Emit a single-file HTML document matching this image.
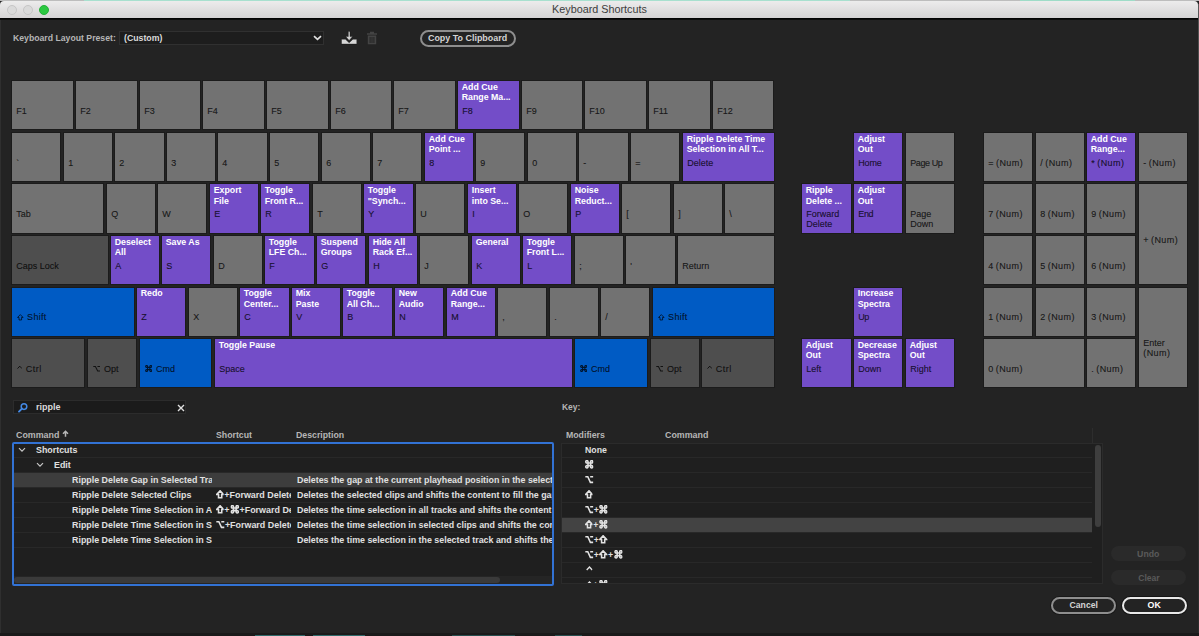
<!DOCTYPE html>
<html>
<head>
<meta charset="utf-8">
<title>Keyboard Shortcuts</title>
<style>
html,body{margin:0;padding:0;}
body{width:1199px;height:636px;overflow:hidden;background:#232323;position:relative;font-family:"Liberation Sans",sans-serif;font-size:10px;color:#c8c8c8;}
.abs{position:absolute;}
#topline{position:absolute;left:0;top:0;width:1199px;height:1px;background:#bdbdbd;}
#titlebar{position:absolute;left:0;top:1px;width:1198px;height:17px;background:linear-gradient(#ececec,#d5d3d4);border-radius:4px 4px 0 0;}
#tbline{position:absolute;left:0;top:18px;width:1198px;height:2px;background:linear-gradient(#000,#101010);}
#title{position:absolute;left:0;width:1199px;top:2px;text-align:center;font-size:10.800px;line-height:13px;color:#3c3c3c;}
.tl{position:absolute;top:3.500px;width:10px;height:10px;border-radius:50%;box-sizing:border-box;}
#redge{position:absolute;left:1198px;top:4px;width:1px;height:632px;background:linear-gradient(#5a5a5a,#3a3a3a 20%,#2c2c2c);}
#bedge{position:absolute;left:0;top:633px;width:1199px;height:3px;background:#1a1a1a;}
.k{position:absolute;box-sizing:border-box;overflow:hidden;box-shadow:0 0 0 1px #1b1b1b;}
.k u{text-decoration:none;}
.gl{display:inline-block;vertical-align:-0.500px;margin-right:3.500px;margin-left:0.800px;}
.gw{display:inline-block;vertical-align:-0.900px;margin:0 0.600px;}
.gw:first-child{margin-left:-0.500px;}
.k.g{background:#727272;}
.k.d{background:#4e4e4e;}
.k.p{background:#734dc8;}
.k.b{background:#005bc4;}
.k b{position:absolute;left:3.700px;font-size:8.800px;line-height:10.500px;color:#fff;font-weight:bold;white-space:nowrap;}
.k i{position:absolute;left:4.200px;-webkit-text-stroke:0.200px rgba(0,0,0,0.5);font-style:normal;font-size:9px;line-height:10.500px;color:rgba(0,0,0,0.78);white-space:nowrap;}
.lbl{position:absolute;white-space:nowrap;font-weight:bold;color:#b6b6b6;font-size:9.300px;line-height:12px;transform-origin:0 50%;}
.sc{display:inline-block;white-space:nowrap;transform-origin:0 50%;}
#dd{position:absolute;left:119px;top:31px;width:205px;height:14px;background:#1d1d1d;border:1px solid #303030;box-sizing:border-box;}
.pill{position:absolute;box-sizing:border-box;border-radius:9px;text-align:center;font-weight:bold;white-space:nowrap;font-size:9.600px;}
.pill .sc{transform-origin:50% 50%;}
#search{position:absolute;left:13px;top:400px;width:173px;height:14px;background:#1b1b1b;border:1px solid #2c2c2c;box-sizing:border-box;}
#tbl{position:absolute;left:12px;top:442px;width:542px;height:144px;box-sizing:border-box;border:2px solid #3272d4;border-radius:2px;background:#1f1f1f;overflow:hidden;}
.row{position:absolute;left:0;width:100%;height:15px;box-sizing:border-box;border-bottom:1px solid #282828;}
.cell{position:absolute;top:1px;height:13px;overflow:hidden;white-space:nowrap;font-weight:bold;color:#e0e0e0;font-size:9.300px;line-height:12px;}
#tbl2{position:absolute;left:561px;top:443px;width:542px;height:141px;box-sizing:border-box;border:1px solid #2b2b2b;background:#1f1f1f;overflow:hidden;}
</style>
</head>
<body>
<div id="topline"><div class="abs" style="left:84px;top:0;width:766px;height:1px;background:#a8e0cf"></div><div class="abs" style="left:1020px;top:0;width:115px;height:1px;background:#9fdcc8"></div></div>
<div id="titlebar">
  <div class="tl" style="left:7px;background:#dadada;border:1px solid #c6c6c6"></div>
  <div class="tl" style="left:23px;background:#dadada;border:1px solid #c6c6c6"></div>
  <div class="tl" style="left:38.700px;background:#2bc840;border:1px solid #24b038"></div>
  <div id="title">Keyboard Shortcuts</div>
</div>
<div id="tbline"></div>
<div id="redge"></div><div class="abs" style="left:0;top:20px;width:1px;height:613px;background:#2f2f2f"></div>
<div class="lbl" style="left:13px;top:32.3px;transform:scaleX(0.934);">Keyboard Layout Preset:</div><div id="dd"><div class="lbl" style="left:4.2px;top:0.3px;transform:scaleX(0.94);color:#dadada">(Custom)</div><svg class="abs" style="left:193px;top:3px" width="9" height="6" viewBox="0 0 9 6"><path d="M1 1.200 L4.500 4.300 L8 1.200" fill="none" stroke="#e0e0e0" stroke-width="1.700"/></svg></div><svg class="abs" style="left:341px;top:31px" width="16" height="14" viewBox="0 0 16 14"><path d="M7.300 0.600h1.700v5h2.600L8.150 9.500 4.700 5.600h2.600z M0.500 8.200h3.900l3.750 3.600 3.750-3.600h3.900v4.900h-15.300z" fill="#d6d6d6" stroke="#111" stroke-width="0.400"/></svg><svg class="abs" style="left:366px;top:31px" width="12" height="14" viewBox="0 0 12 14"><path d="M4 0.800h4v1.400h3V3.800H1V2.200h3z M1.800 4.600h8.400v8.600H1.800z M3.600 6v6h1V6z M5.500 6v6h1V6z M7.400 6v6h1V6z" fill="#444" fill-rule="evenodd"/></svg><div class="pill" style="left:420px;top:30px;width:96px;height:17px;border:2px solid #8e8e8e;color:#d4d4d4;line-height:12.500px"><span class="sc" style="transform:scaleX(0.93)">Copy To Clipboard</span></div>
<div class="k g" style="left:12px;top:81px;width:61px;height:48px"><i style="top:24.55px">F1</i></div>
<div class="k g" style="left:76px;top:81px;width:61px;height:48px"><i style="top:24.55px">F2</i></div>
<div class="k g" style="left:140px;top:81px;width:60px;height:48px"><i style="top:24.55px">F3</i></div>
<div class="k g" style="left:203px;top:81px;width:61px;height:48px"><i style="top:24.55px">F4</i></div>
<div class="k g" style="left:267px;top:81px;width:61px;height:48px"><i style="top:24.55px">F5</i></div>
<div class="k g" style="left:331px;top:81px;width:60px;height:48px"><i style="top:24.55px">F6</i></div>
<div class="k g" style="left:394px;top:81px;width:61px;height:48px"><i style="top:24.55px">F7</i></div>
<div class="k p" style="left:458px;top:81px;width:61px;height:48px"><b style="top:0.8px">Add Cue<br>Range Ma...</b><i style="top:24.55px">F8</i></div>
<div class="k g" style="left:522px;top:81px;width:60px;height:48px"><i style="top:24.55px">F9</i></div>
<div class="k g" style="left:585px;top:81px;width:61px;height:48px"><i style="top:24.55px">F10</i></div>
<div class="k g" style="left:649px;top:81px;width:61px;height:48px"><i style="top:24.55px">F11</i></div>
<div class="k g" style="left:713px;top:81px;width:60px;height:48px"><i style="top:24.55px">F12</i></div>
<div class="k g" style="left:12px;top:133px;width:48px;height:48px"><i style="top:24.55px">`</i></div>
<div class="k g" style="left:64px;top:133px;width:48px;height:48px"><i style="top:24.55px">1</i></div>
<div class="k g" style="left:115px;top:133px;width:49px;height:48px"><i style="top:24.55px">2</i></div>
<div class="k g" style="left:167px;top:133px;width:48px;height:48px"><i style="top:24.55px">3</i></div>
<div class="k g" style="left:218px;top:133px;width:49px;height:48px"><i style="top:24.55px">4</i></div>
<div class="k g" style="left:270px;top:133px;width:48px;height:48px"><i style="top:24.55px">5</i></div>
<div class="k g" style="left:322px;top:133px;width:48px;height:48px"><i style="top:24.55px">6</i></div>
<div class="k g" style="left:373px;top:133px;width:48px;height:48px"><i style="top:24.55px">7</i></div>
<div class="k p" style="left:425px;top:133px;width:48px;height:48px"><b style="top:0.8px">Add Cue<br>Point ...</b><i style="top:24.55px">8</i></div>
<div class="k g" style="left:476px;top:133px;width:48px;height:48px"><i style="top:24.55px">9</i></div>
<div class="k g" style="left:528px;top:133px;width:48px;height:48px"><i style="top:24.55px">0</i></div>
<div class="k g" style="left:579px;top:133px;width:49px;height:48px"><i style="top:24.55px">-</i></div>
<div class="k g" style="left:631px;top:133px;width:48px;height:48px"><i style="top:24.55px">=</i></div>
<div class="k p" style="left:683px;top:133px;width:91px;height:48px"><b style="top:0.8px">Ripple Delete Time<br>Selection in All T...</b><i style="top:24.55px">Delete</i></div>
<div class="k g" style="left:12px;top:184px;width:91px;height:49px"><i style="top:24.95px">Tab</i></div>
<div class="k g" style="left:107px;top:184px;width:48px;height:49px"><i style="top:24.95px">Q</i></div>
<div class="k g" style="left:158px;top:184px;width:48px;height:49px"><i style="top:24.95px">W</i></div>
<div class="k p" style="left:210px;top:184px;width:48px;height:49px"><b style="top:1.2px">Export<br>File</b><i style="top:24.95px">E</i></div>
<div class="k p" style="left:261px;top:184px;width:48px;height:49px"><b style="top:1.2px">Toggle<br>Front R...</b><i style="top:24.95px">R</i></div>
<div class="k g" style="left:313px;top:184px;width:48px;height:49px"><i style="top:24.95px">T</i></div>
<div class="k p" style="left:364px;top:184px;width:49px;height:49px"><b style="top:1.2px">Toggle<br>"Synch...</b><i style="top:24.95px">Y</i></div>
<div class="k g" style="left:416px;top:184px;width:48px;height:49px"><i style="top:24.95px">U</i></div>
<div class="k p" style="left:468px;top:184px;width:48px;height:49px"><b style="top:1.2px">Insert<br>into Se...</b><i style="top:24.95px">I</i></div>
<div class="k g" style="left:519px;top:184px;width:48px;height:49px"><i style="top:24.95px">O</i></div>
<div class="k p" style="left:571px;top:184px;width:48px;height:49px"><b style="top:1.2px">Noise<br>Reduct...</b><i style="top:24.95px">P</i></div>
<div class="k g" style="left:622px;top:184px;width:48px;height:49px"><i style="top:24.95px">[</i></div>
<div class="k g" style="left:674px;top:184px;width:48px;height:49px"><i style="top:24.95px">]</i></div>
<div class="k g" style="left:725px;top:184px;width:49px;height:49px"><i style="top:24.95px">\</i></div>
<div class="k d" style="left:12px;top:236px;width:96px;height:48px"><i style="top:24.55px">Caps Lock</i></div>
<div class="k p" style="left:111px;top:236px;width:48px;height:48px"><b style="top:0.8px">Deselect<br>All</b><i style="top:24.55px">A</i></div>
<div class="k p" style="left:162px;top:236px;width:48px;height:48px"><b style="top:0.8px">Save As</b><i style="top:24.55px">S</i></div>
<div class="k g" style="left:214px;top:236px;width:48px;height:48px"><i style="top:24.55px">D</i></div>
<div class="k p" style="left:265px;top:236px;width:49px;height:48px"><b style="top:0.8px">Toggle<br>LFE Ch...</b><i style="top:24.55px">F</i></div>
<div class="k p" style="left:317px;top:236px;width:48px;height:48px"><b style="top:0.8px">Suspend<br>Groups</b><i style="top:24.55px">G</i></div>
<div class="k p" style="left:369px;top:236px;width:48px;height:48px"><b style="top:0.8px">Hide All<br>Rack Ef...</b><i style="top:24.55px">H</i></div>
<div class="k g" style="left:420px;top:236px;width:48px;height:48px"><i style="top:24.55px">J</i></div>
<div class="k p" style="left:472px;top:236px;width:48px;height:48px"><b style="top:0.8px">General</b><i style="top:24.55px">K</i></div>
<div class="k p" style="left:523px;top:236px;width:48px;height:48px"><b style="top:0.8px">Toggle<br>Front L...</b><i style="top:24.55px">L</i></div>
<div class="k g" style="left:575px;top:236px;width:48px;height:48px"><i style="top:24.55px">;</i></div>
<div class="k g" style="left:626px;top:236px;width:49px;height:48px"><i style="top:24.55px">'</i></div>
<div class="k g" style="left:678px;top:236px;width:96px;height:48px"><i style="top:24.55px">Return</i></div>
<div class="k b" style="left:12px;top:288px;width:122px;height:48px"><i style="top:24.15px"><svg class="gl" height="6.6" viewBox="0 0 7.500 7.500"><path d="M3.750 0.700 L6.900 3.900 H5.200 V6.800 H2.300 V3.900 H0.600 Z" fill="none" stroke="rgba(0,0,0,0.78)" stroke-width="1.0" stroke-linejoin="miter"/></svg><u style="letter-spacing:0.3px">Shift</u></i></div>
<div class="k p" style="left:137px;top:288px;width:48px;height:48px"><b style="top:0.4px">Redo</b><i style="top:24.15px">Z</i></div>
<div class="k g" style="left:189px;top:288px;width:48px;height:48px"><i style="top:24.15px">X</i></div>
<div class="k p" style="left:240px;top:288px;width:49px;height:48px"><b style="top:0.4px">Toggle<br>Center...</b><i style="top:24.15px">C</i></div>
<div class="k p" style="left:292px;top:288px;width:48px;height:48px"><b style="top:0.4px">Mix<br>Paste</b><i style="top:24.15px">V</i></div>
<div class="k p" style="left:343px;top:288px;width:49px;height:48px"><b style="top:0.4px">Toggle<br>All Ch...</b><i style="top:24.15px">B</i></div>
<div class="k p" style="left:395px;top:288px;width:48px;height:48px"><b style="top:0.4px">New<br>Audio</b><i style="top:24.15px">N</i></div>
<div class="k p" style="left:447px;top:288px;width:48px;height:48px"><b style="top:0.4px">Add Cue<br>Range...</b><i style="top:24.15px">M</i></div>
<div class="k g" style="left:498px;top:288px;width:48px;height:48px"><i style="top:24.15px">,</i></div>
<div class="k g" style="left:550px;top:288px;width:48px;height:48px"><i style="top:24.15px">.</i></div>
<div class="k g" style="left:601px;top:288px;width:48px;height:48px"><i style="top:24.15px">/</i></div>
<div class="k b" style="left:653px;top:288px;width:121px;height:48px"><i style="top:24.15px"><svg class="gl" height="6.6" viewBox="0 0 7.500 7.500"><path d="M3.750 0.700 L6.900 3.900 H5.200 V6.800 H2.300 V3.900 H0.600 Z" fill="none" stroke="rgba(0,0,0,0.78)" stroke-width="1.0" stroke-linejoin="miter"/></svg><u style="letter-spacing:0.3px">Shift</u></i></div>
<div class="k d" style="left:12px;top:339px;width:72px;height:48px"><i style="top:24.55px"><svg class="gl" width="5.500" height="7" viewBox="0 0 5.500 7" style="margin-right:3.300px"><path d="M0.500 3.600 L2.750 1.200 L5 3.600" fill="none" stroke="rgba(0,0,0,0.78)" stroke-width="1"/></svg><u style="letter-spacing:0.45px">Ctrl</u></i></div>
<div class="k d" style="left:88px;top:339px;width:48px;height:48px"><i style="top:24.55px"><svg class="gl" height="7" viewBox="0 0 8 7.500"><path d="M0.300 1.500 H2.600 L5 6.500 H7.700 M4.800 1.500 H7.700" fill="none" stroke="rgba(0,0,0,0.78)" stroke-width="1.1"/></svg>Opt</i></div>
<div class="k b" style="left:140px;top:339px;width:71px;height:48px"><i style="top:24.55px"><svg class="gl" height="7" viewBox="0 0 8 7.500"><path d="M2.800 2.600 H5.200 V4.900 H2.800 Z M2.800 2.600 V1.700 A1.050 1.050 0 1 0 1.750 2.600 Z M5.200 2.600 H6.250 A1.050 1.050 0 1 0 5.200 1.700 Z M5.200 4.900 V5.800 A1.050 1.050 0 1 0 6.250 4.900 Z M2.800 4.900 H1.750 A1.050 1.050 0 1 0 2.800 5.800 Z" fill="none" stroke="rgba(0,0,0,0.78)" stroke-width="1.2"/></svg>Cmd</i></div>
<div class="k p" style="left:215px;top:339px;width:357px;height:48px"><b style="top:0.8px">Toggle Pause</b><i style="top:24.55px">Space</i></div>
<div class="k b" style="left:575px;top:339px;width:72px;height:48px"><i style="top:24.55px"><svg class="gl" height="7" viewBox="0 0 8 7.500"><path d="M2.800 2.600 H5.200 V4.900 H2.800 Z M2.800 2.600 V1.700 A1.050 1.050 0 1 0 1.750 2.600 Z M5.200 2.600 H6.250 A1.050 1.050 0 1 0 5.200 1.700 Z M5.200 4.900 V5.800 A1.050 1.050 0 1 0 6.250 4.900 Z M2.800 4.900 H1.750 A1.050 1.050 0 1 0 2.800 5.800 Z" fill="none" stroke="rgba(0,0,0,0.78)" stroke-width="1.2"/></svg>Cmd</i></div>
<div class="k d" style="left:651px;top:339px;width:48px;height:48px"><i style="top:24.55px"><svg class="gl" height="7" viewBox="0 0 8 7.500"><path d="M0.300 1.500 H2.600 L5 6.500 H7.700 M4.800 1.500 H7.700" fill="none" stroke="rgba(0,0,0,0.78)" stroke-width="1.1"/></svg>Opt</i></div>
<div class="k d" style="left:702px;top:339px;width:72px;height:48px"><i style="top:24.55px"><svg class="gl" width="5.500" height="7" viewBox="0 0 5.500 7" style="margin-right:3.300px"><path d="M0.500 3.600 L2.750 1.200 L5 3.600" fill="none" stroke="rgba(0,0,0,0.78)" stroke-width="1"/></svg><u style="letter-spacing:0.45px">Ctrl</u></i></div>
<div class="k p" style="left:854px;top:133px;width:48px;height:48px"><b style="top:0.8px">Adjust<br>Out</b><i style="top:24.55px"><u style="letter-spacing:-0.15px">Home</u></i></div>
<div class="k g" style="left:906px;top:133px;width:48px;height:48px"><i style="top:24.55px"><u style="letter-spacing:-0.4px">Page Up</u></i></div>
<div class="k p" style="left:802px;top:184px;width:49px;height:49px"><b style="top:1.2px">Ripple<br>Delete ...</b><i style="top:24.95px">Forward<br>Delete</i></div>
<div class="k p" style="left:854px;top:184px;width:48px;height:49px"><b style="top:1.2px">Adjust<br>Out</b><i style="top:24.95px"><u style="letter-spacing:-0.3px">End</u></i></div>
<div class="k g" style="left:906px;top:184px;width:48px;height:49px"><i style="top:24.95px">Page<br>Down</i></div>
<div class="k p" style="left:854px;top:288px;width:48px;height:48px"><b style="top:0.4px">Increase<br>Spectra</b><i style="top:24.15px"><u style="letter-spacing:-0.4px">Up</u></i></div>
<div class="k p" style="left:802px;top:339px;width:49px;height:48px"><b style="top:0.8px">Adjust<br>Out</b><i style="top:24.55px">Left</i></div>
<div class="k p" style="left:854px;top:339px;width:48px;height:48px"><b style="top:0.8px">Decrease<br>Spectra</b><i style="top:24.55px">Down</i></div>
<div class="k p" style="left:906px;top:339px;width:48px;height:48px"><b style="top:0.8px">Adjust<br>Out</b><i style="top:24.55px">Right</i></div>
<div class="k g" style="left:984px;top:133px;width:48px;height:48px"><i style="top:24.55px">= <u style="letter-spacing:0.45px">(Num)</u></i></div>
<div class="k g" style="left:1036px;top:133px;width:48px;height:48px"><i style="top:24.55px">/ <u style="letter-spacing:0.45px">(Num)</u></i></div>
<div class="k p" style="left:1087px;top:133px;width:48px;height:48px"><b style="top:0.8px">Add Cue<br>Range...</b><i style="top:24.55px">* <u style="letter-spacing:0.45px">(Num)</u></i></div>
<div class="k g" style="left:1139px;top:133px;width:48px;height:48px"><i style="top:24.55px">- <u style="letter-spacing:0.45px">(Num)</u></i></div>
<div class="k g" style="left:984px;top:184px;width:48px;height:49px"><i style="top:24.95px">7 <u style="letter-spacing:0.45px">(Num)</u></i></div>
<div class="k g" style="left:1036px;top:184px;width:48px;height:49px"><i style="top:24.95px">8 <u style="letter-spacing:0.45px">(Num)</u></i></div>
<div class="k g" style="left:1087px;top:184px;width:48px;height:49px"><i style="top:24.95px">9 <u style="letter-spacing:0.45px">(Num)</u></i></div>
<div class="k g" style="left:984px;top:236px;width:48px;height:48px"><i style="top:24.55px">4 <u style="letter-spacing:0.45px">(Num)</u></i></div>
<div class="k g" style="left:1036px;top:236px;width:48px;height:48px"><i style="top:24.55px">5 <u style="letter-spacing:0.45px">(Num)</u></i></div>
<div class="k g" style="left:1087px;top:236px;width:48px;height:48px"><i style="top:24.55px">6 <u style="letter-spacing:0.45px">(Num)</u></i></div>
<div class="k g" style="left:984px;top:288px;width:48px;height:48px"><i style="top:24.15px">1 <u style="letter-spacing:0.45px">(Num)</u></i></div>
<div class="k g" style="left:1036px;top:288px;width:48px;height:48px"><i style="top:24.15px">2 <u style="letter-spacing:0.45px">(Num)</u></i></div>
<div class="k g" style="left:1087px;top:288px;width:48px;height:48px"><i style="top:24.15px">3 <u style="letter-spacing:0.45px">(Num)</u></i></div>
<div class="k g" style="left:1139px;top:184px;width:48px;height:100px"><i style="top:50.75px">+ <u style="letter-spacing:0.45px">(Num)</u></i></div>
<div class="k g" style="left:1139px;top:288px;width:48px;height:99px"><i style="top:49.85px">Enter<br><u style="letter-spacing:0.45px">(Num)</u></i></div>
<div class="k g" style="left:984px;top:339px;width:100px;height:48px"><i style="top:24.55px">0 <u style="letter-spacing:0.45px">(Num)</u></i></div>
<div class="k g" style="left:1087px;top:339px;width:48px;height:48px"><i style="top:24.55px">. <u style="letter-spacing:0.45px">(Num)</u></i></div>
<div id="search"><svg class="abs" style="left:2.500px;top:0.500px" width="12" height="12" viewBox="0 0 12 12"><circle cx="7" cy="4.600" r="2.800" fill="none" stroke="#4489e4" stroke-width="1.500"/><path d="M4.900 6.700 L2 9.600" stroke="#4489e4" stroke-width="1.900" stroke-linecap="round"/></svg><div class="lbl" style="left:21.5px;top:0px;transform:scaleX(0.97);color:#dadada">ripple</div><svg class="abs" style="left:163px;top:3px" width="8" height="8" viewBox="0 0 8 8"><path d="M1 1 L7 7 M7 1 L1 7" stroke="#e0e0e0" stroke-width="1.400"/></svg></div><div class="lbl" style="left:15.9px;top:428.5px;transform:scaleX(0.955);">Command</div><svg class="abs" style="left:61.500px;top:430px" width="7" height="8" viewBox="0 0 7 8"><path d="M3.500 6.800 V1.600 M1 3.700 L3.500 1.300 L6 3.700" fill="none" stroke="#b8b8b8" stroke-width="1.500"/></svg><div class="lbl" style="left:215.5px;top:428.5px;transform:scaleX(0.94);">Shortcut</div><div class="lbl" style="left:295.5px;top:428.5px;transform:scaleX(0.94);">Description</div><div id="tbl"><div class="row" style="top:-1px"><div class="cell" style="left:21.5px;width:176.5px"><span class="sc" style="transform:scaleX(0.955)">Shortcuts</span></div></div><div class="row" style="top:14px"><div class="cell" style="left:40px;width:158px"><span class="sc" style="transform:scaleX(0.955)">Edit</span></div></div><div class="row" style="top:29px;background:#3d3d3d"><div class="cell" style="left:58px;width:140px"><span class="sc" style="transform:scaleX(0.955)">Ripple Delete Gap in Selected Tracks</span></div><div class="cell" style="left:282.9px;width:256.1px"><span class="sc" style="transform:scaleX(0.953)">Deletes the gap at the current playhead position in the selected tracks</span></div></div><div class="row" style="top:44px"><div class="cell" style="left:58px;width:140px"><span class="sc" style="transform:scaleX(0.955)">Ripple Delete Selected Clips</span></div><div class="cell" style="left:202.3px;width:75.19999999999999px"><span class="sc" style="transform:scaleX(0.96)"><svg class="gw" height="8.6" viewBox="0 0 7.500 7.500"><path d="M3.750 0.700 L6.900 3.900 H5.200 V6.800 H2.300 V3.900 H0.600 Z" fill="none" stroke="#e2e2e2" stroke-width="1.45" stroke-linejoin="miter"/></svg>+Forward Delete</span></div><div class="cell" style="left:282.9px;width:256.1px"><span class="sc" style="transform:scaleX(0.953)">Deletes the selected clips and shifts the content to fill the gap</span></div></div><div class="row" style="top:59px"><div class="cell" style="left:58px;width:140px"><span class="sc" style="transform:scaleX(0.955)">Ripple Delete Time Selection in All Tracks</span></div><div class="cell" style="left:202.3px;width:75.19999999999999px"><span class="sc" style="transform:scaleX(0.96)"><svg class="gw" height="8.6" viewBox="0 0 7.500 7.500"><path d="M3.750 0.700 L6.900 3.900 H5.200 V6.800 H2.300 V3.900 H0.600 Z" fill="none" stroke="#e2e2e2" stroke-width="1.45" stroke-linejoin="miter"/></svg>+<svg class="gw" height="8.6" viewBox="0 0 8 7.500"><path d="M2.800 2.600 H5.200 V4.900 H2.800 Z M2.800 2.600 V1.700 A1.050 1.050 0 1 0 1.750 2.600 Z M5.200 2.600 H6.250 A1.050 1.050 0 1 0 5.200 1.700 Z M5.200 4.900 V5.800 A1.050 1.050 0 1 0 6.250 4.900 Z M2.800 4.900 H1.750 A1.050 1.050 0 1 0 2.800 5.800 Z" fill="none" stroke="#e2e2e2" stroke-width="1.45"/></svg>+Forward Delete</span></div><div class="cell" style="left:282.9px;width:256.1px"><span class="sc" style="transform:scaleX(0.953)">Deletes the time selection in all tracks and shifts the content to fill</span></div></div><div class="row" style="top:74px"><div class="cell" style="left:58px;width:140px"><span class="sc" style="transform:scaleX(0.955)">Ripple Delete Time Selection in Selected Clips</span></div><div class="cell" style="left:202.3px;width:75.19999999999999px"><span class="sc" style="transform:scaleX(0.96)"><svg class="gw" height="8.6" viewBox="0 0 8 7.500"><path d="M0.300 1.500 H2.600 L5 6.500 H7.700 M4.800 1.500 H7.700" fill="none" stroke="#e2e2e2" stroke-width="1.45"/></svg>+Forward Delete</span></div><div class="cell" style="left:282.9px;width:256.1px"><span class="sc" style="transform:scaleX(0.953)">Deletes the time selection in selected clips and shifts the content</span></div></div><div class="row" style="top:89px"><div class="cell" style="left:58px;width:140px"><span class="sc" style="transform:scaleX(0.955)">Ripple Delete Time Selection in Selected Track</span></div><div class="cell" style="left:282.9px;width:256.1px"><span class="sc" style="transform:scaleX(0.953)">Deletes the time selection in the selected track and shifts the content</span></div></div><svg class="abs" style="left:4px;top:3px" width="8" height="6" viewBox="0 0 8 6"><path d="M1 1.200 L4 4.200 L7 1.200" fill="none" stroke="#c8c8c8" stroke-width="1.200"/></svg><svg class="abs" style="left:22px;top:18px" width="8" height="6" viewBox="0 0 8 6"><path d="M1 1.200 L4 4.200 L7 1.200" fill="none" stroke="#c8c8c8" stroke-width="1.200"/></svg><div class="abs" style="left:0;top:131.500px;width:540px;height:9px;background:#252525"></div><div class="abs" style="left:0px;top:132.500px;width:486px;height:6.500px;border-radius:3.500px;background:#3a3a3a"></div></div><div class="lbl" style="left:562px;top:401px;transform:scaleX(0.91);">Key:</div><div class="lbl" style="left:565.5px;top:428.5px;transform:scaleX(0.94);">Modifiers</div><div class="lbl" style="left:665px;top:428.5px;transform:scaleX(0.955);">Command</div><div class="abs" style="left:1092px;top:428px;width:1px;height:15px;background:#2d2d2d"></div><div id="tbl2"><div class="row" style="top:-1.5px;width:530px"><div class="cell" style="left:22.600px;top:1.700px;width:100px"><span class="sc" style="transform:scaleX(0.94)">None</span></div></div><div class="row" style="top:13.5px;width:530px"><div class="cell" style="left:22.600px;top:1.700px;width:100px"><span class="sc" style="transform:scaleX(0.94)"><svg class="gw" height="8.6" viewBox="0 0 8 7.500"><path d="M2.800 2.600 H5.200 V4.900 H2.800 Z M2.800 2.600 V1.700 A1.050 1.050 0 1 0 1.750 2.600 Z M5.200 2.600 H6.250 A1.050 1.050 0 1 0 5.200 1.700 Z M5.200 4.900 V5.800 A1.050 1.050 0 1 0 6.250 4.900 Z M2.800 4.900 H1.750 A1.050 1.050 0 1 0 2.800 5.800 Z" fill="none" stroke="#e2e2e2" stroke-width="1.45"/></svg></span></div></div><div class="row" style="top:28.5px;width:530px"><div class="cell" style="left:22.600px;top:1.700px;width:100px"><span class="sc" style="transform:scaleX(0.94)"><svg class="gw" height="8.6" viewBox="0 0 8 7.500"><path d="M0.300 1.500 H2.600 L5 6.500 H7.700 M4.800 1.500 H7.700" fill="none" stroke="#e2e2e2" stroke-width="1.45"/></svg></span></div></div><div class="row" style="top:43.5px;width:530px"><div class="cell" style="left:22.600px;top:1.700px;width:100px"><span class="sc" style="transform:scaleX(0.94)"><svg class="gw" height="8.6" viewBox="0 0 7.500 7.500"><path d="M3.750 0.700 L6.900 3.900 H5.200 V6.800 H2.300 V3.900 H0.600 Z" fill="none" stroke="#e2e2e2" stroke-width="1.45" stroke-linejoin="miter"/></svg></span></div></div><div class="row" style="top:58.5px;width:530px"><div class="cell" style="left:22.600px;top:1.700px;width:100px"><span class="sc" style="transform:scaleX(0.94)"><svg class="gw" height="8.6" viewBox="0 0 8 7.500"><path d="M0.300 1.500 H2.600 L5 6.500 H7.700 M4.800 1.500 H7.700" fill="none" stroke="#e2e2e2" stroke-width="1.45"/></svg>+<svg class="gw" height="8.6" viewBox="0 0 8 7.500"><path d="M2.800 2.600 H5.200 V4.900 H2.800 Z M2.800 2.600 V1.700 A1.050 1.050 0 1 0 1.750 2.600 Z M5.200 2.600 H6.250 A1.050 1.050 0 1 0 5.200 1.700 Z M5.200 4.900 V5.800 A1.050 1.050 0 1 0 6.250 4.900 Z M2.800 4.900 H1.750 A1.050 1.050 0 1 0 2.800 5.800 Z" fill="none" stroke="#e2e2e2" stroke-width="1.45"/></svg></span></div></div><div class="row" style="top:73.5px;width:530px;background:#434343"><div class="cell" style="left:22.600px;top:1.700px;width:100px"><span class="sc" style="transform:scaleX(0.94)"><svg class="gw" height="8.6" viewBox="0 0 7.500 7.500"><path d="M3.750 0.700 L6.900 3.900 H5.200 V6.800 H2.300 V3.900 H0.600 Z" fill="none" stroke="#e2e2e2" stroke-width="1.45" stroke-linejoin="miter"/></svg>+<svg class="gw" height="8.6" viewBox="0 0 8 7.500"><path d="M2.800 2.600 H5.200 V4.900 H2.800 Z M2.800 2.600 V1.700 A1.050 1.050 0 1 0 1.750 2.600 Z M5.200 2.600 H6.250 A1.050 1.050 0 1 0 5.200 1.700 Z M5.200 4.900 V5.800 A1.050 1.050 0 1 0 6.250 4.900 Z M2.800 4.900 H1.750 A1.050 1.050 0 1 0 2.800 5.800 Z" fill="none" stroke="#e2e2e2" stroke-width="1.45"/></svg></span></div></div><div class="row" style="top:88.5px;width:530px"><div class="cell" style="left:22.600px;top:1.700px;width:100px"><span class="sc" style="transform:scaleX(0.94)"><svg class="gw" height="8.6" viewBox="0 0 8 7.500"><path d="M0.300 1.500 H2.600 L5 6.500 H7.700 M4.800 1.500 H7.700" fill="none" stroke="#e2e2e2" stroke-width="1.45"/></svg>+<svg class="gw" height="8.6" viewBox="0 0 7.500 7.500"><path d="M3.750 0.700 L6.900 3.900 H5.200 V6.800 H2.300 V3.900 H0.600 Z" fill="none" stroke="#e2e2e2" stroke-width="1.45" stroke-linejoin="miter"/></svg></span></div></div><div class="row" style="top:103.5px;width:530px"><div class="cell" style="left:22.600px;top:1.700px;width:100px"><span class="sc" style="transform:scaleX(0.94)"><svg class="gw" height="8.6" viewBox="0 0 8 7.500"><path d="M0.300 1.500 H2.600 L5 6.500 H7.700 M4.800 1.500 H7.700" fill="none" stroke="#e2e2e2" stroke-width="1.45"/></svg>+<svg class="gw" height="8.6" viewBox="0 0 7.500 7.500"><path d="M3.750 0.700 L6.900 3.900 H5.200 V6.800 H2.300 V3.900 H0.600 Z" fill="none" stroke="#e2e2e2" stroke-width="1.45" stroke-linejoin="miter"/></svg>+<svg class="gw" height="8.6" viewBox="0 0 8 7.500"><path d="M2.800 2.600 H5.200 V4.900 H2.800 Z M2.800 2.600 V1.700 A1.050 1.050 0 1 0 1.750 2.600 Z M5.200 2.600 H6.250 A1.050 1.050 0 1 0 5.200 1.700 Z M5.200 4.900 V5.800 A1.050 1.050 0 1 0 6.250 4.900 Z M2.800 4.900 H1.750 A1.050 1.050 0 1 0 2.800 5.800 Z" fill="none" stroke="#e2e2e2" stroke-width="1.45"/></svg></span></div></div><div class="row" style="top:118.5px;width:530px"><div class="cell" style="left:22.600px;top:1.700px;width:100px"><span class="sc" style="transform:scaleX(0.94)"><svg class="gw" width="7.500" height="8.600" viewBox="0 0 7.500 8.600" style="margin-left:0.500px"><path d="M0.800 5 L3.750 2 L6.700 5" fill="none" stroke="#e2e2e2" stroke-width="1.500"/></svg></span></div></div><div class="row" style="top:133.5px;width:530px"><div class="cell" style="left:22.600px;top:1.700px;width:100px"><span class="sc" style="transform:scaleX(0.94)"><svg class="gw" width="7.500" height="8.600" viewBox="0 0 7.500 8.600" style="margin-left:0.500px"><path d="M0.800 5 L3.750 2 L6.700 5" fill="none" stroke="#e2e2e2" stroke-width="1.500"/></svg>+<svg class="gw" height="8.6" viewBox="0 0 8 7.500"><path d="M2.800 2.600 H5.200 V4.900 H2.800 Z M2.800 2.600 V1.700 A1.050 1.050 0 1 0 1.750 2.600 Z M5.200 2.600 H6.250 A1.050 1.050 0 1 0 5.200 1.700 Z M5.200 4.900 V5.800 A1.050 1.050 0 1 0 6.250 4.900 Z M2.800 4.900 H1.750 A1.050 1.050 0 1 0 2.800 5.800 Z" fill="none" stroke="#e2e2e2" stroke-width="1.45"/></svg></span></div></div><div class="abs" style="left:530px;top:0;width:10px;height:141px;background:#1f1f1f;box-sizing:border-box"></div><div class="abs" style="left:532.500px;top:1px;width:6px;height:82px;border-radius:3px;background:#3e3e3e"></div></div><div class="pill" style="left:1111px;top:546px;width:75px;height:15px;background:#2a2a2a;color:#5a5a5a;line-height:15px"><span class="sc" style="transform:scaleX(0.91)">Undo</span></div><div class="pill" style="left:1111px;top:570px;width:75px;height:15px;background:#2a2a2a;color:#5a5a5a;line-height:15px"><span class="sc" style="transform:scaleX(0.89)">Clear</span></div><div class="pill" style="left:1051px;top:597px;width:65px;height:17px;border:2px solid #8e8e8e;box-shadow:0 0 0 1px #181818;color:#d4d4d4;line-height:12.500px"><span class="sc" style="transform:scaleX(0.90)">Cancel</span></div><div class="pill" style="left:1122px;top:597px;width:65px;height:17px;border:2px solid #e8e8e8;box-shadow:0 0 0 1px #141414;color:#fff;line-height:12.500px"><span class="sc" style="transform:scaleX(0.92)">OK</span></div>
<div id="bedge"><div class="abs" style="left:255px;top:1.500px;width:50px;height:1.500px;background:#2f6a6a"></div><div class="abs" style="left:313px;top:1.500px;width:52px;height:1.500px;background:#2f6a6a"></div><div class="abs" style="left:452px;top:1.500px;width:63px;height:1.500px;background:#274e4e"></div><div class="abs" style="left:555px;top:1.500px;width:27px;height:1.500px;background:#274e4e"></div></div>
</body>
</html>
